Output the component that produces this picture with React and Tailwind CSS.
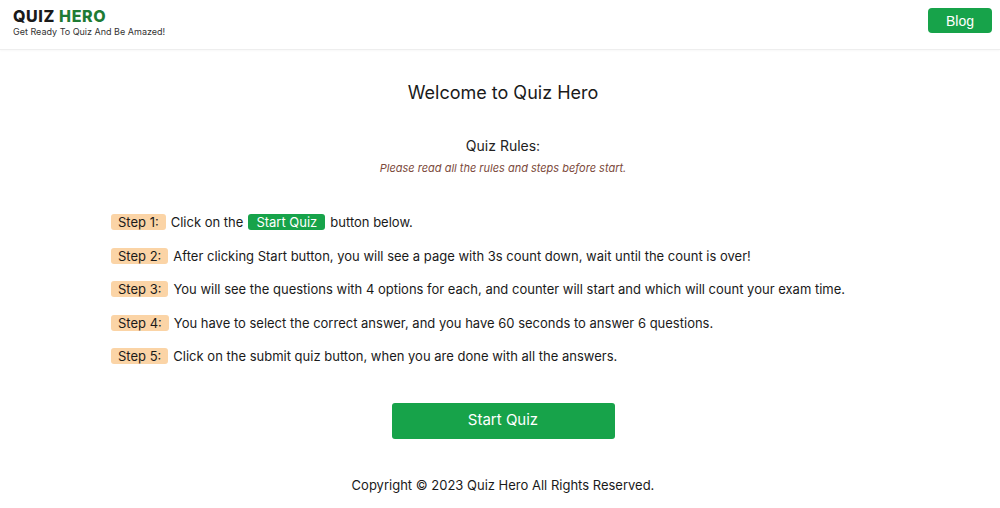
export default function App() {
  const steps = [
    null,
    "After clicking Start button, you will see a page with 3s count down, wait until the count is over!",
    "You will see the questions with 4 options for each, and counter will start and which will count your exam time.",
    "You have to select the correct answer, and you have 60 seconds to answer 6 questions.",
    "Click on the submit quiz button, when you are done with all the answers.",
  ];

  return (
    <div className="min-h-screen bg-white text-[#1a1a1a]" style={{ fontFamily: "Inter, 'Open Sans', sans-serif" }}>
      {/* Header */}
      <header className="flex items-start justify-between h-[50px] pl-[13px] pr-[8px] pt-[8px] border-b border-[#eeeeee] shadow-[0_1px_2px_rgba(0,0,0,0.03)]">
        <div>
          <div className="text-[16px] font-extrabold leading-[16px] tracking-[0.6px]">
            QUIZ <span className="text-[#1e7b34]">HERO</span>
          </div>
          <div className="text-[9px] leading-[10px] mt-[3px] text-[#333]">Get Ready To Quiz And Be Amazed!</div>
        </div>
        <button className="w-[64px] h-[25px] rounded-[4px] bg-[#17a34a] text-white text-[14px] leading-none" style={{ fontFamily: "'Liberation Sans', Arial, sans-serif" }}>
          Blog
        </button>
      </header>

      <main className="flex flex-col items-center pl-[6px]">
        <h1 className="mt-[32px] text-[18px] leading-[22px]">Welcome to Quiz Hero</h1>
        <h2 className="mt-[33px] text-[14px] leading-[18px] text-[#222]">Quiz Rules:</h2>
        <p className="mt-[6px] text-[11px] italic leading-[14px] text-[#7c4a3c]">Please read all the rules and steps before start.</p>

        <div className="self-stretch pl-[105px] mt-[37px] flex flex-col gap-[13px] text-[13px] leading-[20.5px]">
          <div className="flex items-center gap-[5px]">
            <span className="bg-[#fbd4a6] rounded-[3px] px-[7px] leading-[16px]">Step 1:</span>
            <span>Click on the</span>
            <span className="bg-[#17a34a] text-white rounded-[3px] px-[8px] leading-[16px]">Start Quiz</span>
            <span>button below.</span>
          </div>
          {steps.slice(1).map((t, i) => (
            <div key={i} className="flex items-center gap-[5px]">
              <span className="bg-[#fbd4a6] rounded-[3px] px-[7px] leading-[16px]">Step {i + 2}:</span>
              <span>{t}</span>
            </div>
          ))}
        </div>

        <button className="mt-[36px] w-[223px] h-[36px] rounded-[3px] bg-[#17a34a] text-white text-[15px]">
          Start Quiz
        </button>

        <footer className="mt-[37px] text-[13px] leading-[18px]">Copyright © 2023 Quiz Hero All Rights Reserved.</footer>
      </main>
    </div>
  );
}
